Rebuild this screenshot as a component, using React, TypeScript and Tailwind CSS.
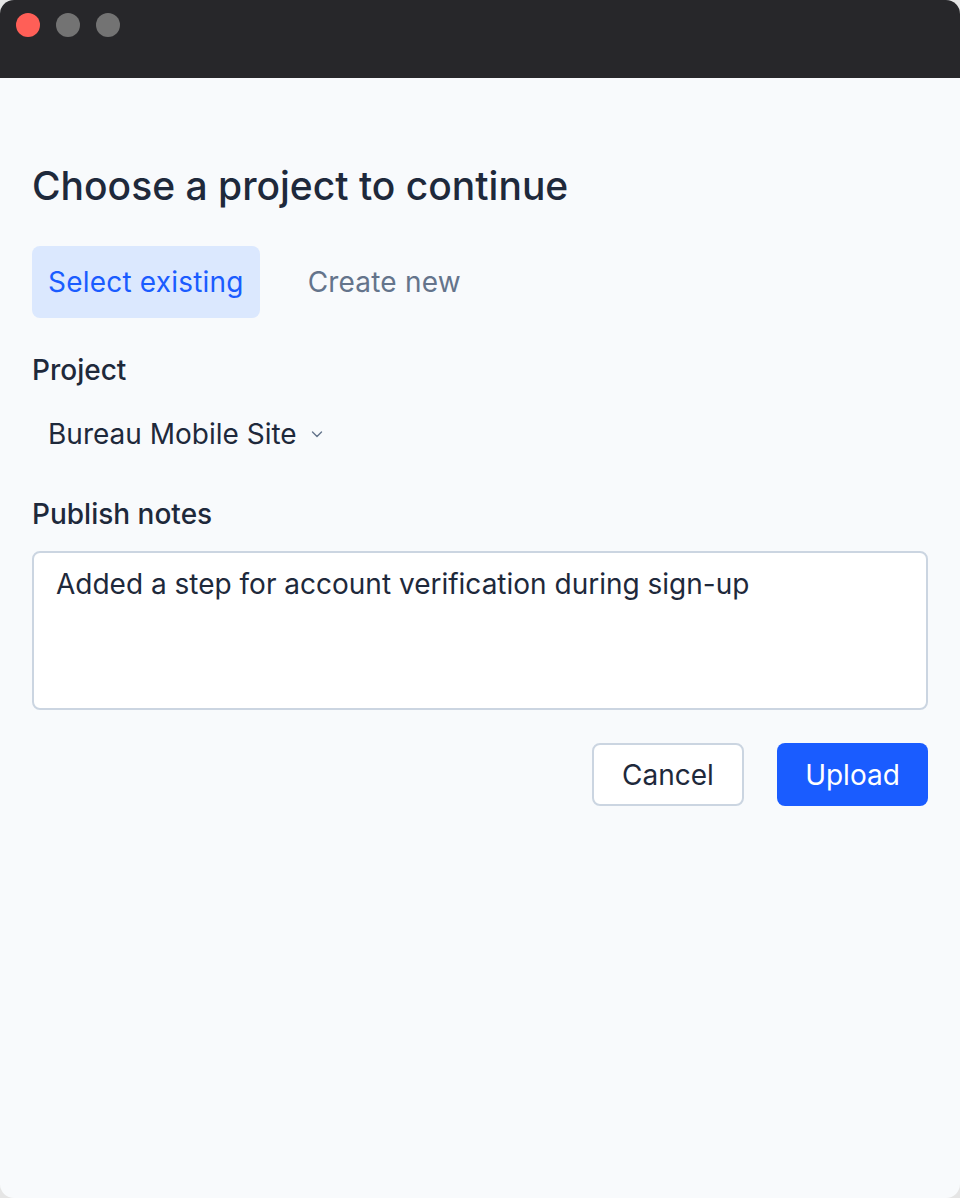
import React from 'react';

const TrafficLights: React.FC = () => (
  <div className="flex items-center gap-4 pl-4">
    <span className="w-6 h-6 rounded-full bg-[#ff5f57]" />
    <span className="w-6 h-6 rounded-full bg-[#737373]" />
    <span className="w-6 h-6 rounded-full bg-[#737373]" />
  </div>
);

export default function App() {
  return (
    <div className="w-[960px] h-[1198px] bg-[#e5e5e5] font-['Inter',sans-serif]">
      <div className="w-full h-full rounded-[14px] overflow-hidden flex flex-col bg-[#f8fafc]">
        <div className="h-[78px] bg-[#27272a] flex items-start pt-[13px] shrink-0">
          <TrafficLights />
        </div>

        <div className="flex-1 px-8 pt-[86px]">
          <h1 className="text-[39px] leading-[44px] text-[#1e293b] font-medium">
            Choose a project to continue
          </h1>

          <div className="flex items-center gap-4 mt-[38px] tracking-[0.2px]">
            <button className="h-[72px] px-4 rounded-[8px] bg-[#dbe8fe] text-[#1a5cff] text-[28px]">
              Select existing
            </button>
            <button className="h-[72px] px-8 text-[#64748b] text-[28px]">
              Create new
            </button>
          </div>

          <div className="mt-[34px] text-[28px] leading-[36px] font-medium text-[#1e293b]">Project</div>

          <button className="mt-[14px] h-[64px] px-4 flex items-center gap-3 text-[28px] text-[#1e293b]">
            Bureau Mobile Site
            <svg width="16" height="16" viewBox="0 0 16 16" fill="none" className="text-[#64748b]">
              <path d="M3.5 6l4.5 4.5L12.5 6" stroke="currentColor" strokeWidth="1.4" strokeLinecap="round" strokeLinejoin="round" />
            </svg>
          </button>

          <div className="mt-[30px] text-[28px] leading-[36px] font-medium text-[#1e293b]">Publish notes</div>

          <div className="mt-[19px] h-[159px] rounded-[8px] border-2 border-[#cbd5e1] bg-white px-[22px] pt-[13px] text-[28px] leading-[36px] text-[#1e293b]">
            Added a step for account verification during sign-up
          </div>

          <div className="flex justify-end gap-[33px] mt-[33px]">
            <button className="w-[152px] h-[63px] rounded-[8px] border-2 border-[#cbd5e1] bg-white text-[28px] text-[#1e293b]">
              Cancel
            </button>
            <button className="w-[151px] h-[63px] rounded-[8px] bg-[#1a5cff] text-[28px] text-white">
              Upload
            </button>
          </div>
        </div>
      </div>
    </div>
  );
}
